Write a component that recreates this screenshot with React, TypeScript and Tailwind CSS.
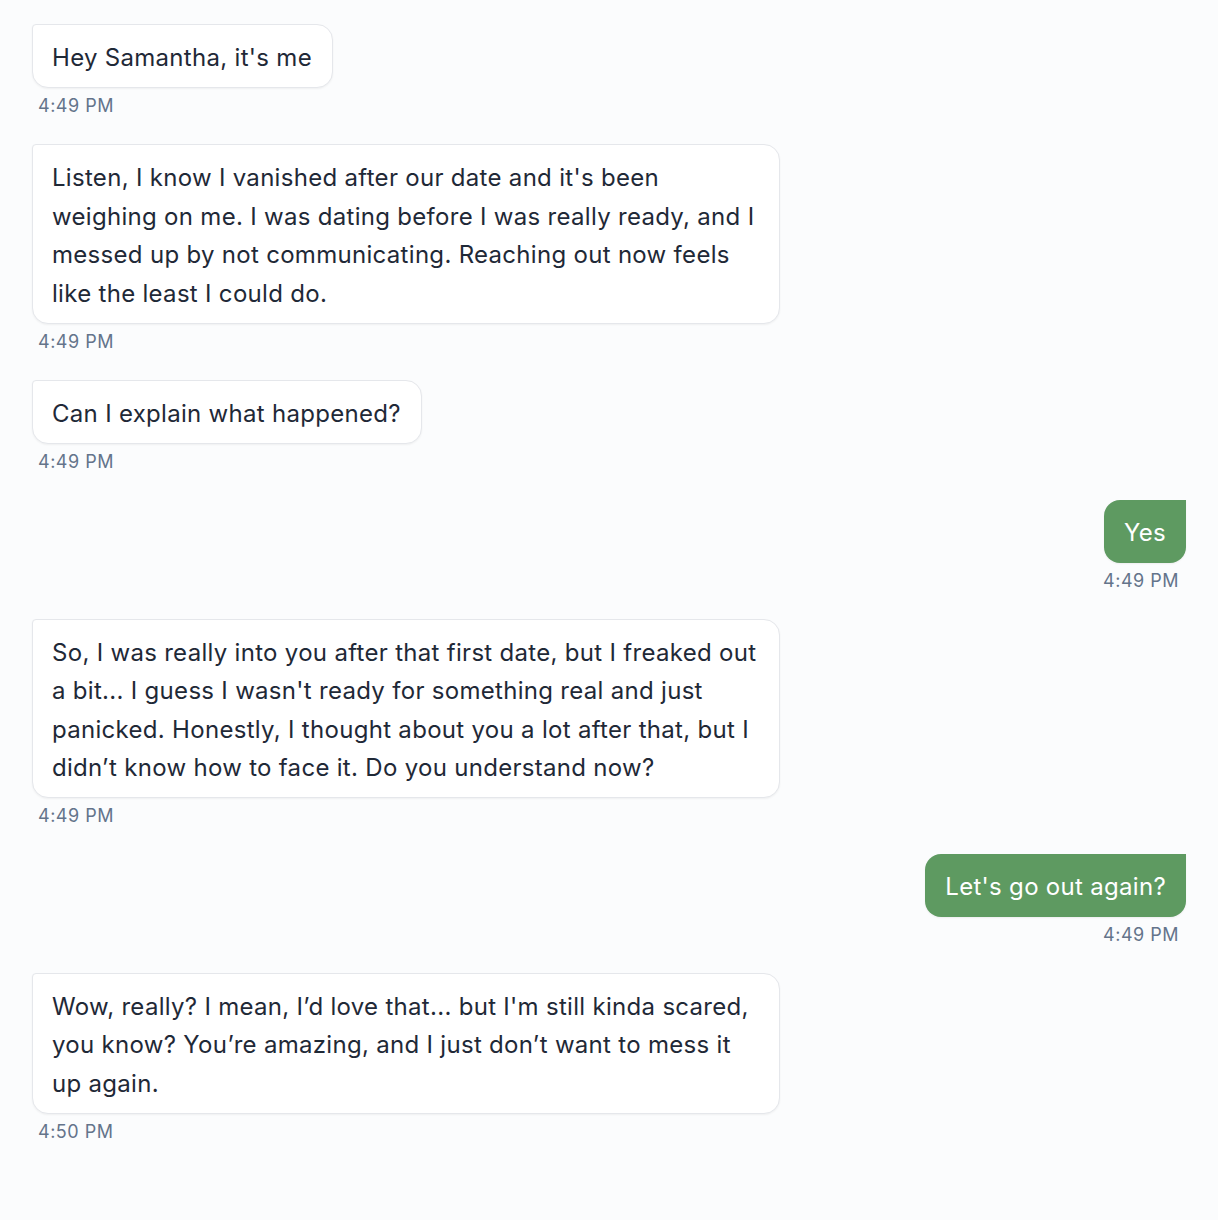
import React from "react";

type Msg = { me: boolean; text: string; time: string };

const messages: Msg[] = [
  { me: false, text: "Hey Samantha, it's me", time: "4:49 PM" },
  {
    me: false,
    text:
      "Listen, I know I vanished after our date and it's been weighing on me. I was dating before I was really ready, and I messed up by not communicating. Reaching out now feels like the least I could do.",
    time: "4:49 PM",
  },
  { me: false, text: "Can I explain what happened?", time: "4:49 PM" },
  { me: true, text: "Yes", time: "4:49 PM" },
  {
    me: false,
    text:
      "So, I was really into you after that first date, but I freaked out a bit... I guess I wasn't ready for something real and just panicked. Honestly, I thought about you a lot after that, but I didn\u2019t know how to face it. Do you understand now?",
    time: "4:49 PM",
  },
  { me: true, text: "Let's go out again?", time: "4:49 PM" },
  {
    me: false,
    text:
      "Wow, really? I mean, I\u2019d love that... but I'm still kinda scared, you know? You\u2019re amazing, and I just don\u2019t want to mess it up again.",
    time: "4:50 PM",
  },
];

export default function App() {
  return (
    <div
      className="min-h-[1220px] w-full bg-[#fbfcfd] px-8 pt-6 pb-10"
      style={{ fontFamily: "Inter, 'Noto Sans', sans-serif" }}
    >
      <div className="flex flex-col gap-[25px]">
        {messages.map((m, i) =>
          m.me ? (
            <div key={i} className="flex flex-col items-end">
              <div className="max-w-[748px] rounded-2xl rounded-tr-none bg-[#5e9a61] px-5 pt-[14px] pb-[10px] text-[24px] leading-[38.4px] tracking-[0.3px] text-white shadow-[0_1px_2px_rgba(0,0,0,0.06)]">
                {m.text}
              </div>
              <div className="mt-1 pr-[7px] text-[18px] leading-[27px] tracking-[0.5px] text-[#64748b]">
                {m.time}
              </div>
            </div>
          ) : (
            <div key={i} className="flex flex-col items-start">
              <div className="max-w-[748px] rounded-2xl rounded-tl-[4px] border border-[#e5e7eb] bg-white pl-[19px] pr-5 pt-[14px] pb-[10px] text-[24px] leading-[38.4px] tracking-[0.3px] text-[#1f2937] shadow-[0_1px_2px_rgba(0,0,0,0.05)]">
                {m.text}
              </div>
              <div className="mt-1 pl-[6px] text-[18px] leading-[27px] tracking-[0.5px] text-[#64748b]">
                {m.time}
              </div>
            </div>
          )
        )}
      </div>
    </div>
  );
}
